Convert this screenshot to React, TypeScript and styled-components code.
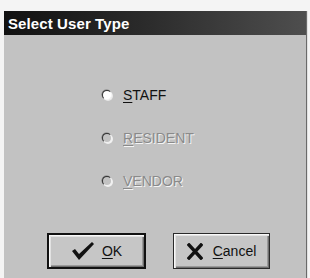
import React from "react";
import styled, { createGlobalStyle } from "styled-components";

const Global = createGlobalStyle`
  html, body { margin: 0; padding: 0; background: #f4f4f4; }
  body { width: 310px; height: 278px; overflow: hidden; font-family: "Liberation Sans", Arial, sans-serif; }
`;

const Screen = styled.div`
  padding: 11px 3px 0 4px;
  height: 278px;
  box-sizing: border-box;
`;

const Window = styled.div`
  display: flex;
  flex-direction: column;
  height: 267px;
  background: #c2c2c2;
  border-right: 1px solid #6a6a6a;
  box-shadow: 1px 0 0 #e0e0e0;
`;

const TitleBar = styled.div`
  flex: 0 0 24px;
  display: flex;
  align-items: center;
  padding-left: 4px;
  background: linear-gradient(to right, #111 0%, #2a2a2a 45%, #4e4e4e 100%);
  color: #fff;
  font-weight: bold;
  font-size: 15px;
  letter-spacing: 0.1px;
`;

const Body = styled.div`
  flex: 1;
  display: flex;
  flex-direction: column;
`;

const RadioGroup = styled.div`
  display: flex;
  flex-direction: column;
  gap: 28px;
  padding: 52px 0 0 98px;
`;

const RadioRow = styled.label<{ $disabled?: boolean }>`
  display: flex;
  align-items: center;
  gap: 11px;
  height: 15px;
  font-size: 14px;
  color: ${(p) => (p.$disabled ? "#8a8a8a" : "#111")};
  text-shadow: ${(p) => (p.$disabled ? "1px 1px 0 #f4f4f4" : "none")};
`;

const RadioDot = styled.span<{ $disabled?: boolean }>`
  width: 10px;
  height: 10px;
  border-radius: 50%;
  box-sizing: border-box;
  background: ${(p) => (p.$disabled ? "#c2c2c2" : "#fff")};
  border: 1.5px solid;
  border-color: #333 #f4f4f4 #f4f4f4 #333;
  box-shadow: 1px 1px 0 ${(p) => (p.$disabled ? "#f0f0f0" : "#e8e8e8")}, -0.5px -0.5px 0 #777;
`;

const Hot = styled.span`
  text-decoration: underline;
  text-underline-offset: 2px;
`;

const ButtonRow = styled.div`
  display: flex;
  gap: 27px;
  padding: 45px 0 0 43px;
`;

const Button = styled.button<{ $default?: boolean; $w: number }>`
  width: ${(p) => p.$w}px;
  height: 36px;
  display: flex;
  align-items: center;
  justify-content: center;
  gap: 5px;
  padding: 0;
  background: #c6c6c6;
  font-family: "Liberation Sans", Arial, sans-serif;
  font-size: 14px;
  color: #111;
  border: ${(p) => (p.$default ? "2px solid #111" : "1px solid #2a2a2a")};
  box-shadow: inset 1px 1px 0 #f8f8f8, inset 2px 2px 0 #e2e2e2, inset -1px -1px 0 #6e6e6e, inset -2px -2px 0 #9a9a9a;
`;

const Check = () => (
  <svg width="24" height="20" viewBox="0 0 24 20">
    <path d="M1 10 L4 8 L8 13 L21 1 L23 3 L8 19 Z" fill="#111" />
  </svg>
);

const Cross = () => (
  <svg width="16" height="17" viewBox="0 0 16 17">
    <path d="M2 2 L14 15 M14 2 L2 15" stroke="#111" strokeWidth="3.4" strokeLinecap="square" />
  </svg>
);

export default function App() {
  return (
    <>
      <Global />
      <Screen>
        <Window>
          <TitleBar>Select User Type</TitleBar>
          <Body>
            <RadioGroup>
              <RadioRow>
                <RadioDot />
                <span><Hot>S</Hot>TAFF</span>
              </RadioRow>
              <RadioRow $disabled>
                <RadioDot $disabled />
                <span><Hot>R</Hot>ESIDENT</span>
              </RadioRow>
              <RadioRow $disabled>
                <RadioDot $disabled />
                <span><Hot>V</Hot>ENDOR</span>
              </RadioRow>
            </RadioGroup>
            <ButtonRow>
              <Button $default $w={99}>
                <Check />
                <span style={{ marginLeft: 2 }}><Hot>O</Hot>K</span>
              </Button>
              <Button $w={97}>
                <Cross />
                <span style={{ marginLeft: 5 }}><Hot>C</Hot>ancel</span>
              </Button>
            </ButtonRow>
          </Body>
        </Window>
      </Screen>
    </>
  );
}
